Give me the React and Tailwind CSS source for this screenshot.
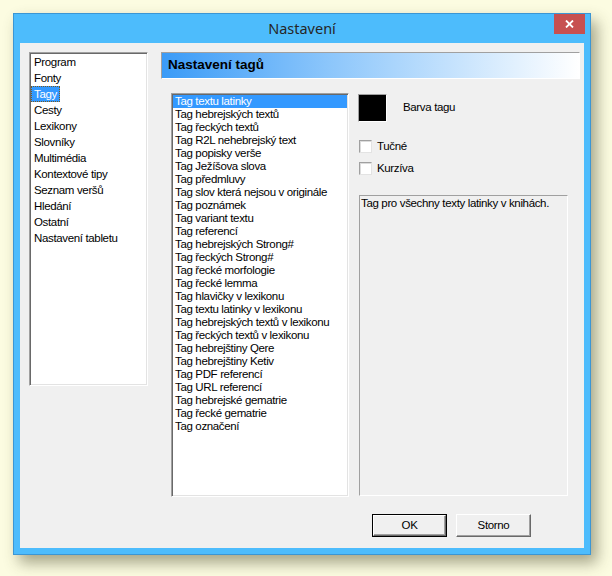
import React from "react";

const navItems = [
  "Program",
  "Fonty",
  "Tagy",
  "Cesty",
  "Lexikony",
  "Slovníky",
  "Multimédia",
  "Kontextové tipy",
  "Seznam veršů",
  "Hledání",
  "Ostatní",
  "Nastavení tabletu",
];

const tags = [
  "Tag textu latinky",
  "Tag hebrejských textů",
  "Tag řeckých textů",
  "Tag R2L nehebrejský text",
  "Tag popisky verše",
  "Tag Ježíšova slova",
  "Tag předmluvy",
  "Tag slov která nejsou v originále",
  "Tag poznámek",
  "Tag variant textu",
  "Tag referencí",
  "Tag hebrejských Strong#",
  "Tag řeckých Strong#",
  "Tag řecké morfologie",
  "Tag řecké lemma",
  "Tag hlavičky v lexikonu",
  "Tag textu latinky v lexikonu",
  "Tag hebrejských textů v lexikonu",
  "Tag řeckých textů v lexikonu",
  "Tag hebrejštiny Qere",
  "Tag hebrejštiny Ketiv",
  "Tag PDF referencí",
  "Tag URL referencí",
  "Tag hebrejské gematrie",
  "Tag řecké gematrie",
  "Tag označení",
];

const sunken =
  "border-t border-l border-t-[#a0a0a0] border-l-[#a0a0a0] border-r border-b border-r-white border-b-white shadow-[inset_1px_1px_0_#696969,inset_-1px_-1px_0_#e3e3e3]";

function Checkbox({ label }) {
  return (
    <div className="flex items-center h-[13px]">
      <div className="w-[13px] h-[13px] bg-white border border-t-[#a0a0a0] border-l-[#a0a0a0] border-r-[#e3e3e3] border-b-[#e3e3e3] shadow-[inset_1px_1px_0_#dcdcdc]" />
      <span className="ml-[5px] leading-[13px]">{label}</span>
    </div>
  );
}

export default function App() {
  return (
    <div
      className="w-[612px] h-[576px] bg-[#fcfce1] pt-[13px] pl-[13px] text-[11.5px] tracking-[-0.35px] text-black"
      style={{ fontFamily: '"Liberation Sans", Arial, sans-serif' }}
    >
      <div className="w-[578px] h-[542px] border border-[#3b96d4] bg-[#4dbcfc] px-[6px] pb-[6px] flex flex-col shadow-[6px_8px_14px_rgba(60,60,30,0.45)]">
        {/* Title bar */}
        <div className="relative h-[29px] -mx-[6px] flex items-center justify-center">
          <span
            className="text-[14.5px] tracking-normal text-[#262626]"
            style={{ fontFamily: '"Noto Sans", "Open Sans", sans-serif' }}
          >
            Nastavení
          </span>
          <div className="absolute right-[5px] top-0 w-[31px] h-[20px] bg-[#c75050] flex items-center justify-center">
            <svg width="9" height="8" viewBox="0 0 9 8">
              <path d="M1 0.5 L8 7.5 M8 0.5 L1 7.5" stroke="white" strokeWidth="1.8" />
            </svg>
          </div>
        </div>

        {/* Content */}
        <div className="flex-1 bg-[#f0f0f0] pl-[9px] pt-[9px] flex flex-col">
          <div className="flex">
            {/* Left nav list */}
            <div className={`w-[119px] h-[334px] bg-white ${sunken} pt-[1px] pl-[1px]`}>
              {navItems.map((it) => (
                <div key={it} className="h-[16px] flex items-center">
                  {it === "Tagy" ? (
                    <span className="h-[16px] leading-[16px] px-[3px] bg-[#3399ff] text-white outline outline-1 outline-dotted outline-offset-[-1px] outline-[#7a5a20]">
                      {it}
                    </span>
                  ) : (
                    <span className="leading-[16px] px-[3px]">{it}</span>
                  )}
                </div>
              ))}
            </div>

            {/* Right column */}
            <div className="ml-[13px] w-[419px] flex flex-col">
              <div className="h-[27px] border border-t-[#a0a0a0] border-l-[#a0a0a0] border-r-white border-b-white bg-[linear-gradient(to_right,#3a9bf7,#8cc6fb_40%,#ffffff)] flex items-center pl-[6px]">
                <span className="font-bold text-[13.5px] tracking-normal">Nastavení tagů</span>
              </div>

              <div className="ml-[10px] mt-[14px] flex">
                {/* Tag list */}
                <div className={`w-[178px] h-[404px] bg-white ${sunken} pt-[1px] pl-[1px] pr-[1px]`}>
                  {tags.map((t, i) => (
                    <div
                      key={t}
                      className={`h-[13px] leading-[13px] pl-[2px] whitespace-nowrap ${
                        i === 0 ? "bg-[#3399ff] text-white" : ""
                      }`}
                    >
                      {t}
                    </div>
                  ))}
                </div>

                {/* Right side controls */}
                <div className="ml-[9px] flex flex-col">
                  <div className="mt-[1px] flex items-center">
                    <div className="w-[29px] h-[28px] bg-black border border-t-[#a0a0a0] border-l-[#a0a0a0] border-r-white border-b-white" />
                    <span className="ml-[16px]">Barva tagu</span>
                  </div>
                  <div className="ml-[1px] mt-[18px]">
                    <Checkbox label="Tučné" />
                  </div>
                  <div className="ml-[1px] mt-[9px]">
                    <Checkbox label="Kurzíva" />
                  </div>
                  <div className="ml-[1px] mt-[20px] w-[209px] h-[301px] border border-t-[#a0a0a0] border-l-[#a0a0a0] border-r-white border-b-white p-[1px] leading-[13px]">
                    Tag pro všechny texty latinky v knihách.
                  </div>
                </div>
              </div>
            </div>
          </div>

          {/* Buttons */}
          <div className="mt-[17px] pl-[343px] flex gap-[9px]">
            <div className="w-[75px] h-[23px] border border-[#000] bg-[#f0f0f0] flex">
              <div className="flex-1 border border-t-white border-l-white border-r-[#696969] border-b-[#696969] flex items-center justify-center shadow-[inset_-1px_-1px_0_#a0a0a0]">
                OK
              </div>
            </div>
            <div className="w-[75px] h-[23px] border border-t-white border-l-white border-r-[#696969] border-b-[#696969] bg-[#f0f0f0] flex items-center justify-center shadow-[inset_-1px_-1px_0_#a0a0a0]">
              Storno
            </div>
          </div>
        </div>
      </div>
    </div>
  );
}
